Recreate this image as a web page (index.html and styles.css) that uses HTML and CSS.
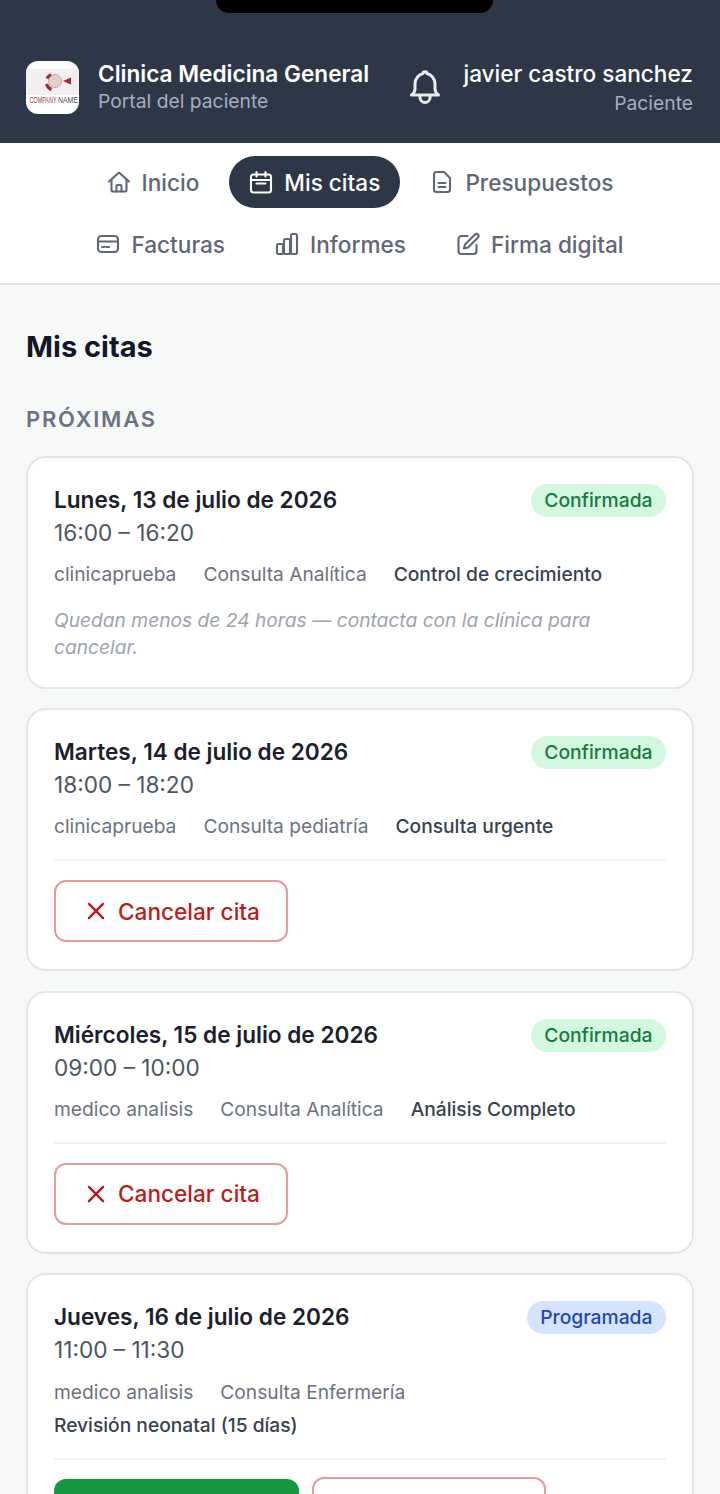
FILE: index.html
```html
<!DOCTYPE html>
<html lang="es">
<head>
<meta charset="utf-8">
<title>Mis citas</title>
<link rel="stylesheet" href="styles.css">
</head>
<body>
<div class="page">
  <header class="header">
    <div class="notch"></div>
    <div class="brand">
      <svg class="logo" viewBox="0 0 53 53" width="53" height="53" role="img" aria-label="Logo">
        <rect x="0" y="0" width="53" height="53" fill="#fff"/>
        <rect x="0" y="8" width="53" height="26" fill="#f1efef"/>
        <circle cx="29" cy="20" r="6.500" fill="#e4cfcf" stroke="#c9a4a6" stroke-width="1"/>
        <path d="M25 13.500a8.500 8.500 0 0 0-4 4M20.500 23a8.500 8.500 0 0 0 5 5.500" fill="none" stroke="#a2252b" stroke-width="3"/>
        <path d="M37 20l8-3.500v7z" fill="#a2252b"/>
        <text x="3.500" y="41.500" class="logo-text logo-red" textLength="27" lengthAdjust="spacingAndGlyphs">COMPANY</text>
        <text x="32" y="41.500" class="logo-text" textLength="20" lengthAdjust="spacingAndGlyphs">NAME</text>
      </svg>
      <div class="brand-text">
        <div class="brand-title">Clinica Medicina General</div>
        <div class="brand-sub">Portal del paciente</div>
      </div>
    </div>
    <svg class="bell" viewBox="0 0 36 36" width="36" height="36" fill="none" stroke="#e8ebf0" stroke-width="3" stroke-linecap="round" stroke-linejoin="round" aria-hidden="true">
      <path d="M4.500 25c2-1.500 3.500-3.500 3.500-6v-5c0-5.500 4-9.500 8-10.500 0-2.500 4-2.500 4 0 4 1 8 5 8 10.500v5c0 2.500 1.500 4.500 3.500 6z"/>
      <path d="M13 26v1.500a5 5 0 0 0 10 0V26"/>
    </svg>
    <div class="user">
      <div class="user-name">javier castro sanchez</div>
      <div class="user-role">Paciente</div>
    </div>
  </header>

  <nav class="nav">
    <a class="nav-item">
      <svg class="nav-icon" viewBox="0 0 24 24"><path d="M2 11.500 12 2.500l10 9"/><path d="M4.500 9.500V20a1.500 1.500 0 0 0 1.500 1.500h12a1.500 1.500 0 0 0 1.500-1.500V9.500"/><path d="M9.500 21.500V16a1 1 0 0 1 1-1h3a1 1 0 0 1 1 1v5.500"/></svg>
      Inicio
    </a>
    <a class="nav-item nav-active">
      <svg class="nav-icon" viewBox="0 0 24 24"><rect x="2" y="4.500" width="20" height="18" rx="2.500"/><path d="M7.500 2v4.500M16.500 2v4.500M2 10h20M7.500 13.500h9"/></svg>
      Mis citas
    </a>
    <a class="nav-item">
      <svg class="nav-icon" viewBox="0 0 24 24"><path d="M14 2H6.500A2.500 2.500 0 0 0 4 4.500v15A2.500 2.500 0 0 0 6.500 22h11a2.500 2.500 0 0 0 2.500-2.500V8z"/><path d="M8.500 13h7M8.500 17h7"/></svg>
      Presupuestos
    </a>
    <a class="nav-item">
      <svg class="nav-icon" viewBox="0 0 24 24"><rect x="2" y="4" width="20" height="16" rx="3.500"/><path d="M2 9.500h20M6 15h2.500M10.500 15H13"/></svg>
      Facturas
    </a>
    <a class="nav-item">
      <svg class="nav-icon" viewBox="0 0 24 24"><rect x="2" y="12" width="6" height="10" rx="1.500"/><rect x="9" y="7" width="6" height="15" rx="1.500"/><rect x="16" y="2" width="6" height="20" rx="1.500"/></svg>
      Informes
    </a>
    <a class="nav-item">
      <svg class="nav-icon" viewBox="0 0 24 24"><path d="M11.500 4H5.500A3 3 0 0 0 2.500 7v12a3 3 0 0 0 3 3h12a3 3 0 0 0 3-3v-6"/><path d="M19 2.500a2.100 2.100 0 0 1 3 3L12 15.500 8 16.500l1-4z"/></svg>
      Firma digital
    </a>
  </nav>

  <main class="main">
    <h1 class="title">Mis citas</h1>
    <h2 class="section">PRÓXIMAS</h2>

    <article class="card">
      <div class="card-top">
        <div>
          <div class="date">Lunes, 13 de julio de 2026</div>
          <div class="time">16:00 – 16:20</div>
        </div>
        <span class="badge badge-green">Confirmada</span>
      </div>
      <div class="meta"><span>clinicaprueba</span><span>Consulta Analítica</span><span class="meta-strong">Control de crecimiento</span></div>
      <p class="note">Quedan menos de 24 horas — contacta con la clínica para cancelar.</p>
    </article>

    <article class="card">
      <div class="card-top">
        <div>
          <div class="date">Martes, 14 de julio de 2026</div>
          <div class="time">18:00 – 18:20</div>
        </div>
        <span class="badge badge-green">Confirmada</span>
      </div>
      <div class="meta"><span>clinicaprueba</span><span>Consulta pediatría</span><span class="meta-strong">Consulta urgente</span></div>
      <div class="actions">
        <button class="btn-cancel"><svg class="x-icon" viewBox="0 0 24 24"><path d="M5.500 5.500l13 13M18.500 5.500l-13 13"/></svg>Cancelar cita</button>
      </div>
    </article>

    <article class="card">
      <div class="card-top">
        <div>
          <div class="date">Miércoles, 15 de julio de 2026</div>
          <div class="time">09:00 – 10:00</div>
        </div>
        <span class="badge badge-green">Confirmada</span>
      </div>
      <div class="meta"><span>medico analisis</span><span>Consulta Analítica</span><span class="meta-strong">Análisis Completo</span></div>
      <div class="actions">
        <button class="btn-cancel"><svg class="x-icon" viewBox="0 0 24 24"><path d="M5.500 5.500l13 13M18.500 5.500l-13 13"/></svg>Cancelar cita</button>
      </div>
    </article>

    <article class="card">
      <div class="card-top">
        <div>
          <div class="date">Jueves, 16 de julio de 2026</div>
          <div class="time">11:00 – 11:30</div>
        </div>
        <span class="badge badge-blue">Programada</span>
      </div>
      <div class="meta meta-wrap"><span>medico analisis</span><span>Consulta Enfermería</span><span class="meta-strong">Revisión neonatal (15 días)</span></div>
      <div class="actions actions-tight">
        <button class="btn-confirm">Confirmar cita</button>
        <button class="btn-cancel"><svg class="x-icon" viewBox="0 0 24 24"><path d="M5.500 5.500l13 13M18.500 5.500l-13 13"/></svg>Cancelar cita</button>
      </div>
    </article>
  </main>
</div>
</body>
</html>
```

FILE: styles.css
```css
* { box-sizing: border-box; }
html, body { margin: 0; padding: 0; }
body { font-family: Inter, "Liberation Sans", sans-serif; background: #f7f9f9; color: #1a202c; }
.page { width: 720px; height: 1494px; overflow: hidden; background: #f7f9f9; }

.header { position: relative; height: 143px; background: #2d3748; padding: 61px 27px 0 26px; display: flex; align-items: flex-start; }
.notch { position: absolute; left: 216px; top: 0; width: 277px; height: 13px; background: #000; border-radius: 0 0 18px 18px; }
.brand { display: flex; gap: 19px; flex: 1; }
.logo { display: block; width: 53px; height: 53px; border-radius: 12px; flex: none; }
.logo-text { font-family: "Liberation Sans", sans-serif; font-size: 8.500px; fill: #4a4a4a; }
.logo-red { fill: #a04045; }
.brand-title { font-size: 22.600px; font-weight: 600; line-height: 25px; color: #fff; white-space: nowrap; }
.brand-sub { font-size: 19.300px; line-height: 31px; color: #a3afbf; white-space: nowrap; }
.bell { margin: 9px 20px 0 0; flex: none; }
.user { text-align: right; }
.user-name { font-size: 22.600px; font-weight: 500; line-height: 26px; color: #fff; white-space: nowrap; }
.user-role { font-size: 19.300px; line-height: 32px; color: #a3afbf; }

.nav { height: 142px; background: #fff; border-bottom: 2px solid #e2e5e9; padding: 13px 20px 0; display: flex; flex-wrap: wrap; justify-content: center; align-content: flex-start; column-gap: 10px; row-gap: 10px; }
.nav-item { display: flex; align-items: center; gap: 11px; height: 52px; padding: 0 20px; border-radius: 26px; font-size: 22.600px; font-weight: 500; color: #5f6775; white-space: nowrap; }
.nav-active { background: #2d3748; color: #fff; }
.nav-icon { width: 24px; height: 24px; fill: none; stroke: currentColor; stroke-width: 2.100; stroke-linecap: round; stroke-linejoin: round; flex: none; }

.main { padding: 0 26px; }
.title { margin: 43px 0 0; font-size: 29px; line-height: 38px; font-weight: 700; color: #111827; }
.section { margin: 39px 0 0; font-size: 22px; line-height: 28px; font-weight: 600; letter-spacing: 1.750px; color: #6b7280; }

.card { margin: 23px 0 19.500px; padding: 26px 26px 27px; background: #fff; border: 2px solid #e3e6e9; border-radius: 20px; }
.card + .card { margin-top: 0; }
.card-top { display: flex; justify-content: space-between; align-items: flex-start; }
.date { font-size: 22.600px; line-height: 32px; font-weight: 600; color: #1a202c; }
.time { font-size: 22.600px; line-height: 33px; color: #4b5563; }
.badge { height: 33px; padding: 0 13.500px; border-radius: 17px; font-size: 19.300px; line-height: 32px; font-weight: 500; white-space: nowrap; }
.badge-green { background: #d4f7e0; color: #167a43; }
.badge-blue { background: #d5e4fc; color: #1f47ae; }

.meta { display: flex; flex-wrap: wrap; column-gap: 27px; margin-top: 9px; font-size: 19.200px; line-height: 33px; color: #6b7280; }
.meta-wrap { margin-top: 10px; }
.meta-strong { color: #374151; font-weight: 500; }
.meta-wrap .meta-strong { flex-basis: 100%; }
.note { margin: 16px 0 -1.500px; font-size: 19.200px; line-height: 27px; font-style: italic; color: #9ca3af; }

.actions { display: flex; gap: 13px; margin-top: 16px; padding-top: 19px; border-top: 2px solid #f1f2f4; align-items: flex-start; }
.actions-tight { padding-top: 17px; }
.btn-cancel { display: flex; align-items: center; gap: 9px; height: 62px; padding: 0 26px 0 27px; font: 500 22.600px Inter, "Liberation Sans", sans-serif; color: #b91c1c; background: #fff; border: 2px solid #e59a9f; border-radius: 12px; white-space: nowrap; }
.x-icon { width: 26px; height: 26px; fill: none; stroke: currentColor; stroke-width: 2.200; stroke-linecap: round; flex: none; }
.btn-confirm { height: 62px; width: 245px; margin-top: 2px; font: 600 22.600px Inter, "Liberation Sans", sans-serif; color: #fff; background: #16973f; border: 0; border-radius: 12px; }
```
